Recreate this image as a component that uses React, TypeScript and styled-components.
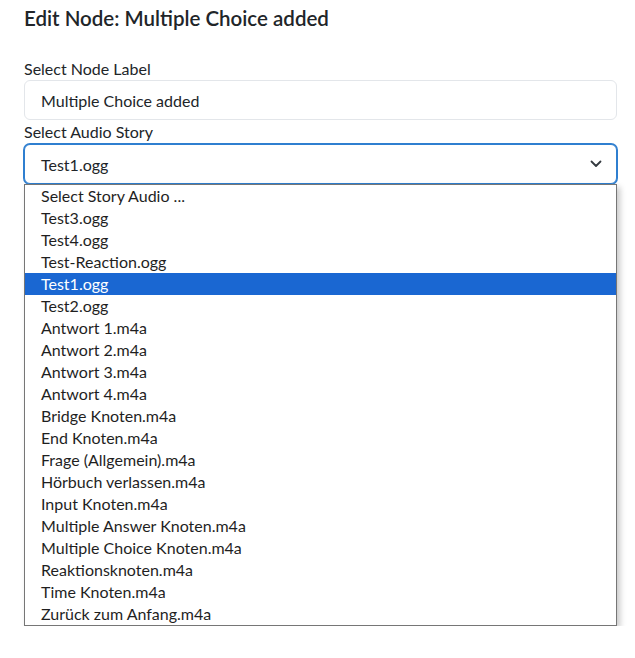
import React from 'react';
import styled, { createGlobalStyle } from 'styled-components';

const GlobalStyle = createGlobalStyle`
  * { box-sizing: border-box; }
  body {
    margin: 0;
    background: #fff;
    color: #212529;
    font-family: 'Lato', 'Liberation Sans', sans-serif;
  }
`;

const Page = styled.div`
  padding: 6px 18px 0 24px;
  display: flex;
  flex-direction: column;
`;

const Title = styled.h5`
  margin: 0 0 29px;
  font-size: 20.5px;
  font-weight: 600;
  line-height: 24px;
  color: #212529;
`;

const Label = styled.label`
  display: block;
  font-size: 16px;
  line-height: 20px;
  margin-bottom: 1px;
  color: #212529;
`;

const Field = styled.div<{ focused?: boolean }>`
  height: 40px;
  display: flex;
  align-items: center;
  justify-content: space-between;
  padding: 0 16px;
  font-size: 16px;
  border-radius: 6px;
  background: #fff;
  border: 1px solid ${(p) => (p.focused ? '#2f7fd0' : '#e3e6ea')};
  box-shadow: ${(p) => (p.focused ? '0 0 0 1px #2f7fd0' : 'none')};
  margin-top: ${(p) => (p.focused ? '1px' : '0')};
  margin-bottom: ${(p) => (p.focused ? '0' : '2px')};
`;

const Chevron = styled.svg`
  width: 12px;
  height: 8px;
  margin-right: -2px;
`;

const Menu = styled.ul`
  list-style: none;
  margin: 0;
  padding: 0;
  border: 1px solid #767676;
  box-shadow: 3px 3px 6px rgba(0, 0, 0, 0.22);
  background: #fff;
`;

const Option = styled.li<{ selected?: boolean }>`
  height: 22px;
  line-height: 22px;
  padding-left: 16px;
  font-size: 16px;
  background: ${(p) => (p.selected ? '#1a67d2' : 'transparent')};
  color: ${(p) => (p.selected ? '#fff' : '#1f1f1f')};
`;

const options = [
  'Select Story Audio ...',
  'Test3.ogg',
  'Test4.ogg',
  'Test-Reaction.ogg',
  'Test1.ogg',
  'Test2.ogg',
  'Antwort 1.m4a',
  'Antwort 2.m4a',
  'Antwort 3.m4a',
  'Antwort 4.m4a',
  'Bridge Knoten.m4a',
  'End Knoten.m4a',
  'Frage (Allgemein).m4a',
  'Hörbuch verlassen.m4a',
  'Input Knoten.m4a',
  'Multiple Answer Knoten.m4a',
  'Multiple Choice Knoten.m4a',
  'Reaktionsknoten.m4a',
  'Time Knoten.m4a',
  'Zurück zum Anfang.m4a',
];

export default function App() {
  const selected = 'Test1.ogg';
  return (
    <>
      <GlobalStyle />
      <Page>
        <Title>Edit Node: Multiple Choice added</Title>
        <Label>Select Node Label</Label>
        <Field>Multiple Choice added</Field>
        <Label>Select Audio Story</Label>
        <Field focused>
          <span>{selected}</span>
          <Chevron viewBox="0 0 12 8">
            <path d="M1.5 1.5l4.5 4.5 4.5-4.5" fill="none" stroke="#343a40" strokeWidth="1.8" strokeLinecap="round" strokeLinejoin="round" />
          </Chevron>
        </Field>
        <Menu>
          {options.map((o) => (
            <Option key={o} selected={o === selected}>
              {o}
            </Option>
          ))}
        </Menu>
      </Page>
    </>
  );
}
